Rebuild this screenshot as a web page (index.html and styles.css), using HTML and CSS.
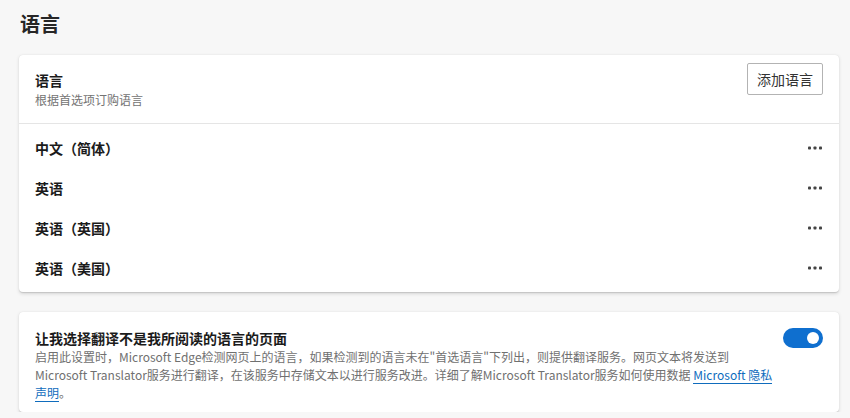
FILE: index.html
```html
<!DOCTYPE html>
<html lang="zh-CN">
<head>
    <meta charset="UTF-8">
    <title>语言</title>
    <link rel="stylesheet" href="styles.css">
</head>
<body>
<h1 class="page-title">语言</h1>

<div class="card">
  <div class="card-header">
    <div class="header-text">
      <div class="title">语言</div>
      <div class="subtitle">根据首选项订购语言</div>
    </div>
    <button class="btn">添加语言</button>
  </div>
  <div class="lang-list">
    <div class="lang-row"><span>中文（简体）</span><span class="more"><svg width="16" height="4" viewBox="0 0 16 4"><rect x="1" y="0.5" width="3" height="3" rx="0.8"/><rect x="6.5" y="0.5" width="3" height="3" rx="0.8"/><rect x="12" y="0.5" width="3" height="3" rx="0.8"/></svg></span></div>
    <div class="lang-row"><span>英语</span><span class="more"><svg width="16" height="4" viewBox="0 0 16 4"><rect x="1" y="0.5" width="3" height="3" rx="0.8"/><rect x="6.5" y="0.5" width="3" height="3" rx="0.8"/><rect x="12" y="0.5" width="3" height="3" rx="0.8"/></svg></span></div>
    <div class="lang-row"><span>英语（英国）</span><span class="more"><svg width="16" height="4" viewBox="0 0 16 4"><rect x="1" y="0.5" width="3" height="3" rx="0.8"/><rect x="6.5" y="0.5" width="3" height="3" rx="0.8"/><rect x="12" y="0.5" width="3" height="3" rx="0.8"/></svg></span></div>
    <div class="lang-row"><span>英语（美国）</span><span class="more"><svg width="16" height="4" viewBox="0 0 16 4"><rect x="1" y="0.5" width="3" height="3" rx="0.8"/><rect x="6.5" y="0.5" width="3" height="3" rx="0.8"/><rect x="12" y="0.5" width="3" height="3" rx="0.8"/></svg></span></div>
  </div>
</div>

<div class="card card-setting">
  <div class="setting-text">
    <div class="title">让我选择翻译不是我所阅读的语言的页面</div>
    <div class="desc">启用此设置时，Microsoft Edge检测网页上的语言，如果检测到的语言未在"首选语言"下列出，则提供翻译服务。网页文本将发送到 Microsoft Translator服务进行翻译，在该服务中存储文本以进行服务改进。详细了解Microsoft Translator服务如何使用数据 <a class="link" href="#">Microsoft 隐私声明</a>。</div>
  </div>
  <div class="toggle on"><div class="knob"></div></div>
</div>
</body>
</html>
```

FILE: styles.css
```css
body {
    margin: 0;
    padding: 0 11px 0 19px;
    background: #f7f7f7;
    font-family: "Noto Sans CJK SC", "Noto Sans", sans-serif;
    color: #1b1b1b;
}
.page-title {
    margin: 10px 0 17px 1px;
    font-size: 20px;
    line-height: 28px;
    font-weight: 700;
    color: #262626;
}
.card {
    background: #fff;
    border-radius: 4px;
    box-shadow: 0 1.6px 3.6px rgba(0, 0, 0, 0.13), 0 0.3px 0.9px rgba(0, 0, 0, 0.11);
}
.card-header {
    display: flex;
    justify-content: space-between;
    align-items: flex-start;
    padding: 8px 16px 13px;
    border-bottom: 1px solid #e5e5e5;
}
.header-text {
    padding-top: 7px;
}
.title {
    font-size: 14px;
    line-height: 20px;
    font-weight: 700;
    color: #1b1b1b;
}
.subtitle {
    font-size: 12px;
    line-height: 20px;
    color: #737373;
}
.btn {
    height: 32px;
    width: 76px;
    padding: 0;
    border: 1px solid #b3b3b3;
    border-radius: 2px;
    background: #fff;
    font-family: inherit;
    font-size: 14px;
    color: #333;
}
.lang-list {
    padding: 4px 0;
}
.lang-row {
    display: flex;
    justify-content: space-between;
    align-items: center;
    height: 40px;
    padding: 0 16px;
    font-size: 14px;
    font-weight: 700;
}
.more {
    display: flex;
    fill: #444;
}
.more svg {
    display: block;
}
.card-setting {
    display: flex;
    align-items: flex-start;
    gap: 8px;
    margin-top: 20px;
    padding: 16px 16px 10px;
}
.setting-text {
    flex: 1;
}
.desc {
    font-size: 12px;
    line-height: 18px;
    color: #707070;
}
.link {
    color: #0f6cbd;
    text-decoration: none;
    border-bottom: 1px solid #0f6cbd;
}
.toggle {
    flex-shrink: 0;
    position: relative;
    width: 40px;
    height: 20px;
    border-radius: 10px;
    background: #0f6fcf;
}
.knob {
    position: absolute;
    top: 4px;
    right: 4px;
    width: 12px;
    height: 12px;
    border-radius: 50%;
    background: #fff;
}
```
